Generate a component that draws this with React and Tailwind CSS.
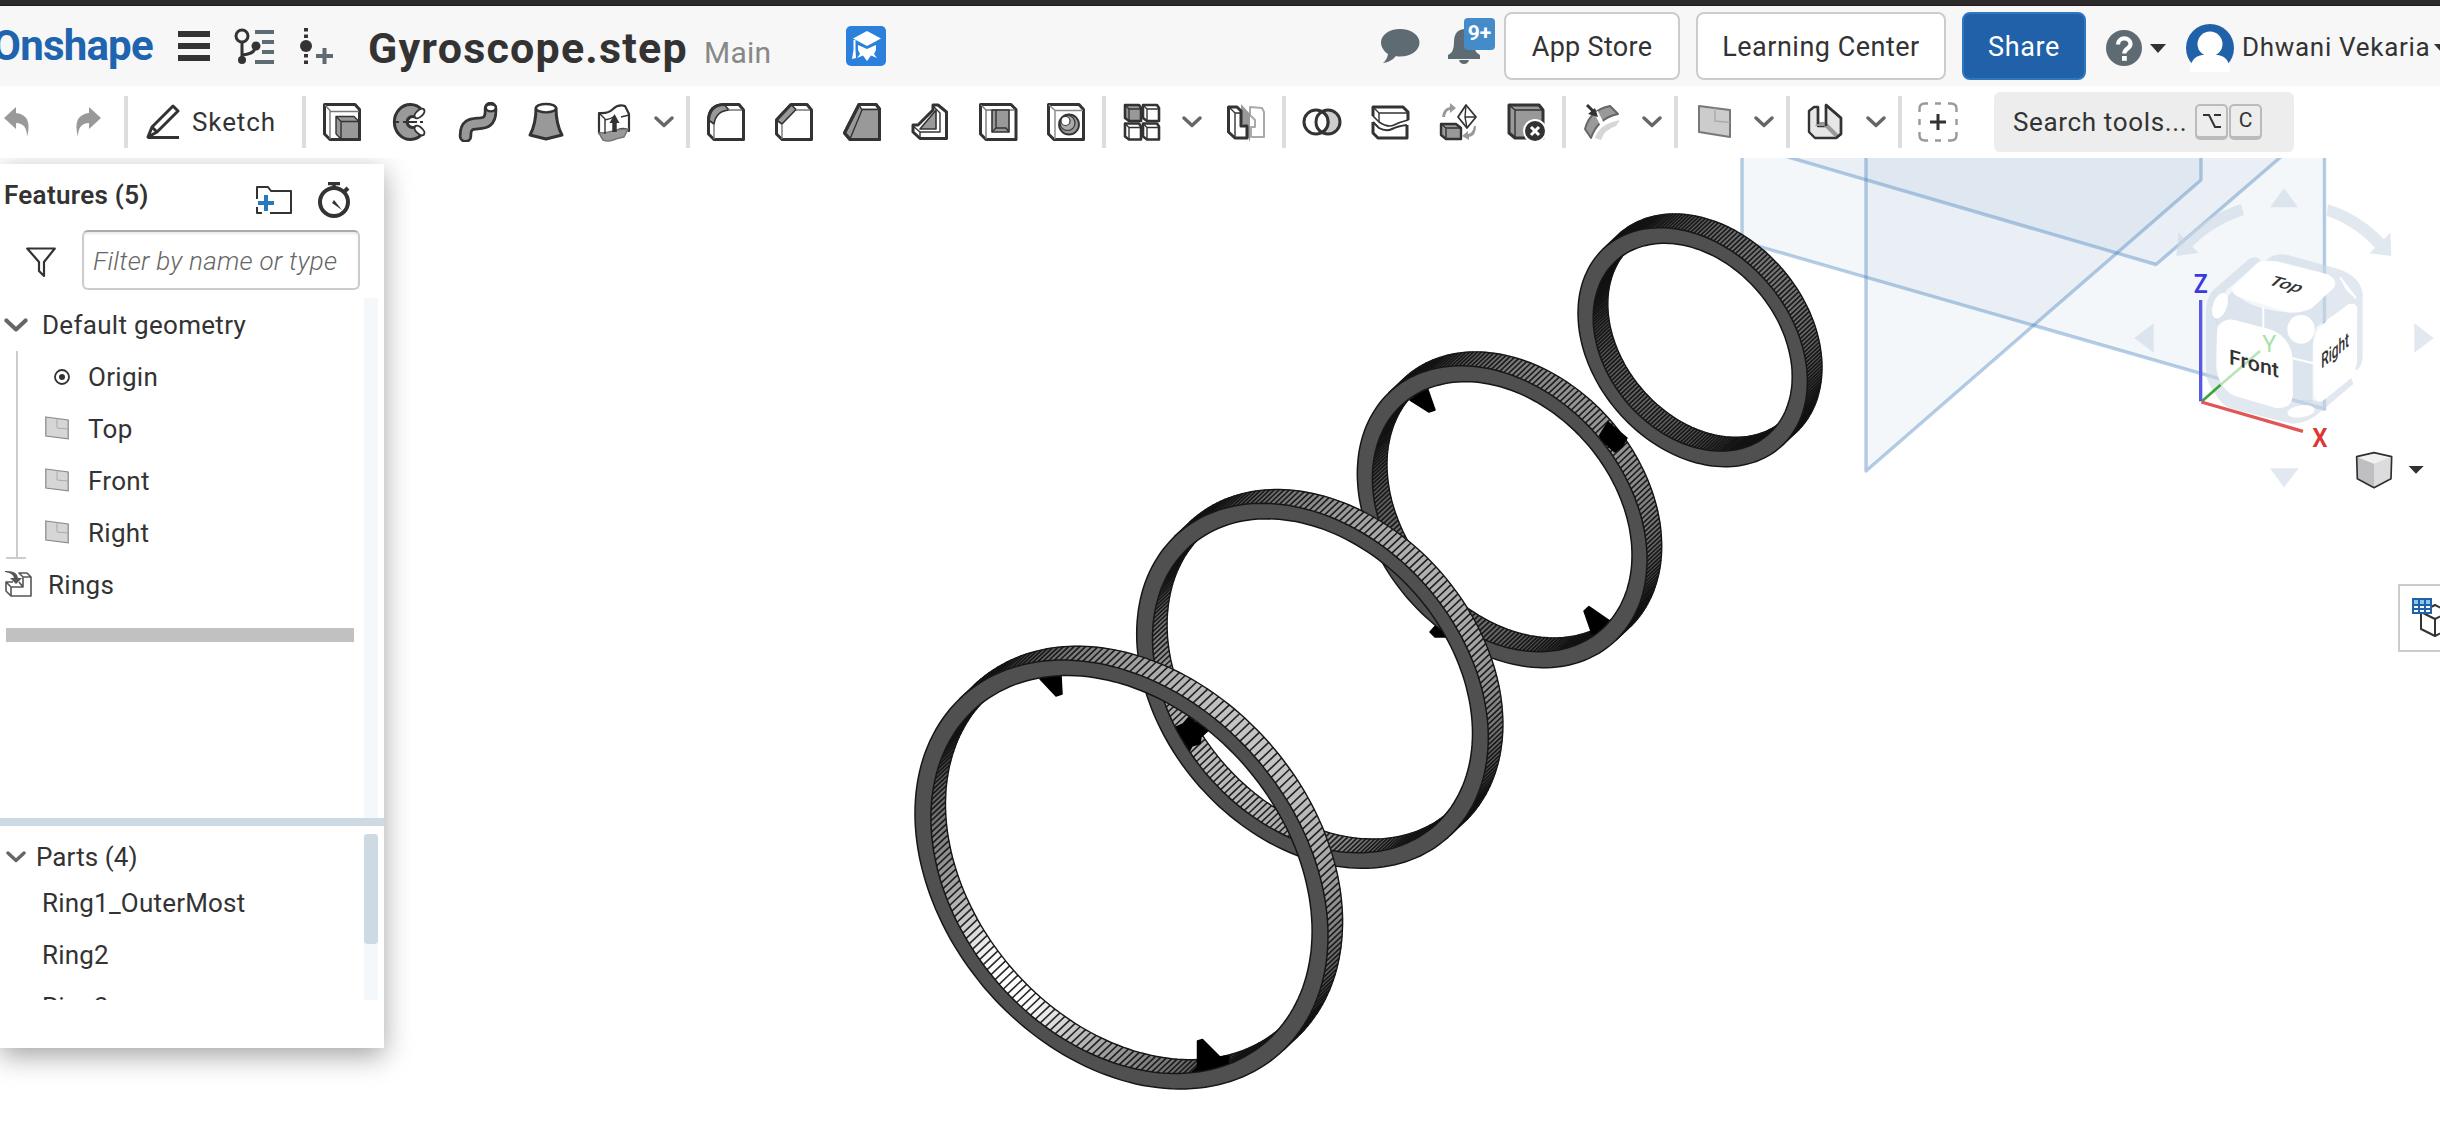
import React from "react";

const FONT = "font-['Roboto','Noto_Sans',sans-serif]";

/* ---------- 3D ring geometry ---------- */
const RHO = 0.285;
const SIN = Math.sqrt(1 - RHO * RHO);
const DX = 14.6;
const DY = -13.8;
const FACETS = 220;

const RINGS = [
  { cx: 1692.7, cy: 347.2, w: 114.7, h: 119.5, iw: 99.5, ih: 103.9, outer: 118, inner: 98, shine: 0 },
  {
    cx: 1502.2, cy: 516.7, w: 144.9, h: 151, iw: 129.8, ih: 135, outer: 150, inner: 116, shine: 0,
    wallPins: ["1600,435 1608,422 1627,438 1622,447 1615,452 1601,440"],
    pins: ["1410,400 1427,387 1435,410 1429,412", "1584,611 1589,606.5 1610,621 1607,632 1592,634", "1430,632 1438,623 1450,618 1455,637 1435,637"],
  },
  {
    cx: 1312.5, cy: 685.8, w: 175.8, h: 182.5, iw: 160, ih: 167, outer: 176, inner: 186, shine: 0,
    pins: ["1174,728 1183,724 1189,717 1195,723 1205,720.5 1210,729 1201,737 1200,743.5 1192,746 1189,752 1180,742"],
  },
  {
    cx: 1121.5, cy: 874.5, w: 206.5, h: 214.5, iw: 190.6, ih: 199, outer: 196, inner: 172, shine: 90,
    pins: ["1040,679 1061,675 1062,694 1056,696", "1197.5,1041 1202.5,1039.5 1220,1057 1229,1056 1228,1064 1200,1073 1192,1072 1197.5,1067"],
  },
];

const f = (n) => n.toFixed(1);

function point(r, w, h, t) {
  return [r.cx + w * Math.cos(t), r.cy + h * (RHO * Math.cos(t) + SIN * Math.sin(t))];
}

function ellipse(r, w, h) {
  let d = "";
  for (let i = 0; i < 180; i++) {
    const [x, y] = point(r, w, h, (i / 180) * Math.PI * 2);
    d += (i ? "L" : "M") + f(x) + " " + f(y);
  }
  return d + "Z";
}

function wall(r, w, h, center, peak, shine) {
  const quads = [];
  let lines = "";
  let edge = "";
  for (let i = 0; i < FACETS; i++) {
    const a = ((i - FACETS / 2) / FACETS) * Math.PI * 2;
    if (Math.abs(a) > Math.PI / 2) continue;
    const t = center + a;
    const step = (Math.PI * 2) / FACETS;
    const [x0, y0] = point(r, w, h, t);
    const [x1, y1] = point(r, w, h, t + step);
    const c = Math.max(0, Math.cos(a + step / 2));
    const v = Math.min(255, Math.round(peak * Math.pow(c, 0.9) + shine * Math.pow(c, 14)));
    quads.push({
      d: `M${f(x0)} ${f(y0)}L${f(x1)} ${f(y1)}L${f(x1 + DX)} ${f(y1 + DY)}L${f(x0 + DX)} ${f(y0 + DY)}Z`,
      fill: `rgb(${v},${v},${v})`,
    });
    lines += `M${f(x0)} ${f(y0)}l${DX} ${DY}`;
    edge += (edge ? "L" : "M") + f(x0 + DX) + " " + f(y0 + DY);
  }
  return { quads, lines, edge };
}

function Wall({ data }) {
  return (
    <g>
      {data.quads.map((q, i) => (
        <path key={i} d={q.d} fill={q.fill} stroke={q.fill} strokeWidth="0.4" />
      ))}
      <path d={data.lines} stroke="#0c0c0c" strokeOpacity="0.88" strokeWidth="1.6" fill="none" />
      <path d={data.edge} stroke="#161616" strokeWidth="1.4" fill="none" />
    </g>
  );
}

function Ring({ r }) {
  const peakAngle = (-51.7 * Math.PI) / 180;
  const outer = wall(r, r.w, r.h, peakAngle, r.outer, 0);
  const inner = wall(r, r.iw, r.ih, peakAngle + Math.PI, r.inner, r.shine);
  return (
    <g>
      <Wall data={inner} />
      <Wall data={outer} />
      {(r.wallPins || []).concat(r.pins || []).map((p, i) => (
        <polygon key={i} points={p} fill="#000" stroke="#000" strokeWidth="1.5" strokeLinejoin="round" />
      ))}
      <path d={ellipse(r, r.w, r.h) + ellipse(r, r.iw, r.ih)} fillRule="evenodd" fill="#505050" stroke="#161616" strokeWidth="1.5" />
    </g>
  );
}

function Planes() {
  const s = { fill: "#3c78aa", fillOpacity: 0.06, stroke: "#4682be", strokeOpacity: 0.4, strokeWidth: 3.4, strokeLinejoin: "round" };
  return (
    <g>
      <path d="M1742 150V241.5L2324.5 409V150" {...s} />
      <path d="M1866 150V471L2201 180V150" {...s} />
      <path d="M1764 150L2156 264.5L2290 149" {...s} />
    </g>
  );
}

function ViewCube() {
  return (
    <g transform="translate(2130 180) scale(0.33333)">
      <g fill="#cbd8e3" fillOpacity="0.58">
        <path d="M462 25L504 82H420Z" />
        <path d="M420 865H506L462 922Z" />
        <path d="M13 474L71 430V518Z" />
        <path d="M911 474L853 430V518Z" />
        <path d="M332 72L343 105Q250 135 187 200L206 218L139 228L146 157L163 177Q228 108 332 72Z" />
        <path d="M594 73L590 107Q680 140 735 204L718 220L784 228L781 157L762 178Q690 103 594 73Z" />
        <path d="M358 236Q375 226 391 238L388 247L290 330L250 400L262 420L258 540Q258 600 300 640L440 684L488 660L548 660L570 667L664 594L670 612L560 705Q520 735 480 730L310 688Q275 680 255 640Q225 600 228 570L228 400Q228 350 250 330Z" />
        <path fillRule="evenodd" d="M408 242Q430 218 470 224L628 268Q690 290 698 340V530Q694 570 672 570L680 552L682 385Q678 368 660 372L560 440Q548 470 548 500V665L488 660V540Q480 480 440 458L320 422Q280 414 262 440L250 400L310 330Q340 385 480 398Q530 398 560 370L610 325Q625 300 590 282L440 243ZM630 292L678 355Q660 345 645 325Z" />
      </g>
      <path d="M384 247Q410 240 440 245L590 282Q628 300 610 325L545 385Q510 403 470 395L330 352Q300 340 308 322Z" fill="#fff" />
      <path d="M262 470Q262 415 310 419L420 448Q480 470 488 535V650Q482 690 435 683L315 648Q268 625 260 570Z" fill="#fff" />
      <path d="M550 500Q553 455 580 432L655 373Q676 366 681 390V545Q675 585 650 605L585 658Q562 675 552 645Z" fill="#fff" />
      <ellipse cx="270" cy="377" rx="21" ry="40" fill="#fff" transform="rotate(20 270 377)" />
      <ellipse cx="513" cy="448" rx="41" ry="43" fill="#fff" />
      <ellipse cx="513" cy="694" rx="41" ry="18" fill="#fff" transform="rotate(-8 513 694)" />
      <path d="M400 380V446M488 535L550 550M630 292L678 355" stroke="#fff" strokeWidth="6" />
      <path d="M216 664L272 614" stroke="#3aa63a" strokeWidth="8" />
      <path d="M272 614L390 513" stroke="#b9e3b9" strokeWidth="8" />
      <path d="M212 360V664" stroke="#5a5ae0" strokeWidth="10" />
      <path d="M214 666L519 754" stroke="#e25555" strokeWidth="10" />
      <g className="font-['Roboto',sans-serif]">
        <text x="191" y="338" fontSize="76" fontWeight="600" fill="#3a3ae0" textLength="42" lengthAdjust="spacingAndGlyphs">Z</text>
        <text x="547" y="800" fontSize="76" fontWeight="600" fill="#dc3535" textLength="46" lengthAdjust="spacingAndGlyphs">X</text>
        <text x="397" y="515" fontSize="74" fill="#aadfaa" textLength="42" lengthAdjust="spacingAndGlyphs">Y</text>
        <text transform="matrix(1 0.28 0 1 297 551)" fontSize="62" fontWeight="500" fill="#333" textLength="150" lengthAdjust="spacingAndGlyphs">Front</text>
        <text transform="matrix(0.96 0.27 -0.62 0.58 410 312)" fontSize="60" fontWeight="500" fill="#333" textLength="98" lengthAdjust="spacingAndGlyphs">Top</text>
        <text transform="matrix(0.78 -0.66 0 1 574 567)" fontSize="62" fontWeight="500" fill="#333" textLength="106" lengthAdjust="spacingAndGlyphs">Right</text>
      </g>
      <g strokeLinejoin="round">
        <path d="M680 830L732 818L785 830L783 896L732 923L682 896Z" fill="#dcdcde" />
        <path d="M680 830L732 851V923L682 896Z" fill="#bfbfc1" />
        <path d="M680 830L732 818L785 830L732 851Z" fill="#f1f1f1" />
        <path d="M680 830L732 818L785 830L783 896L732 923L682 896Z" fill="none" stroke="#303030" strokeWidth="5" />
      </g>
      <path d="M836 858H881L858 881Z" fill="#303030" />
    </g>
  );
}

/* ---------- icons (40 x 40 artboards) ---------- */
const DARK = "#333";
const MID = "#999";

function Ico({ children }) {
  return (
    <svg viewBox="0 0 40 40" className="size-10 shrink-0" fill="none" stroke={DARK} strokeWidth="3" strokeLinejoin="round">
      {children}
    </svg>
  );
}
const Thin = (p) => <path strokeWidth="1.4" {...p} />;

const Extrude = () => (
  <Ico>
    <path d="M2.500 2.500H33L37.500 7.500V37.500H8L2.500 32Z" fill="#fff" />
    <Thin d="M3 3L8 8.500V37M8 9.500H37" stroke="#777" />
    <path d="M14 14.500H32L37 20V37H19L14 32Z" fill={MID} stroke="none" />
    <Thin d="M14 32V14.500H32L37 19.500H19V37M14 14.500L19 19.500M19 37L14 32" />
    <path d="M37.500 20V37.500H18" />
  </Ico>
);
const Revolve = () => (
  <Ico>
    <path d="M32 8A16 17.500 0 1 0 32 32L25 25A5.500 5.500 0 1 1 25 15Z" fill={MID} />
    <ellipse cx="29.500" cy="11.500" rx="3.200" ry="6" transform="rotate(48 29.500 11.500)" fill="#fff" strokeWidth="2" />
    <ellipse cx="29.500" cy="28.500" rx="3.200" ry="6" transform="rotate(-48 29.500 28.500)" fill="#fff" strokeWidth="2" />
    <path d="M5 20H9M13 20H27M30 20H33" strokeWidth="2" />
  </Ico>
);
const Sweep = () => (
  <Ico>
    <path d="M32.500 6.500C34 34 7 10 7.500 34" strokeWidth="13.500" strokeLinecap="round" />
    <path d="M32.500 6.500C34 34 7 10 7.500 34" stroke={MID} strokeWidth="8" strokeLinecap="round" />
    <ellipse cx="32.800" cy="5.800" rx="5" ry="3.600" fill="#fff" strokeWidth="2.400" />
  </Ico>
);
const Loft = () => (
  <Ico>
    <path d="M10 6Q10 22 4 33L20 37L36 33Q30 22 30 6Z" fill={MID} />
    <ellipse cx="20" cy="6.200" rx="10" ry="4.200" fill="#fff" strokeWidth="2.400" />
  </Ico>
);
const Thicken = () => (
  <Ico>
    <path d="M5 11Q14 12 19 7T31 4L35 12V29L31 27Q26 26 19 31T5 31Z" fill="#fff" strokeWidth="2.200" />
    <path d="M5 31Q13 31 19 29T34 27L30 35Q24 36 19 38T9 38Z" fill={MID} stroke="#777" strokeWidth="1.600" />
    <Thin d="M5 11L11 17V32M11 18Q17 17 21 14M27 15L35 13" />
    <path d="M20.500 30V19" strokeWidth="4.500" />
    <path d="M15.500 21L20.500 12L25.500 21Z" fill={DARK} stroke="none" />
  </Ico>
);
const Fillet = () => (
  <Ico>
    <path d="M2.500 18Q3 3 18 2.500H33L37.500 8V37.500H8L2.500 32Z" fill="#fff" />
    <path d="M2.500 18Q3 3 18 2.500L23 8Q10 9 8 22Z" fill={MID} strokeWidth="1.600" />
    <Thin d="M8 22V37M22 8H36" stroke="#777" />
    <path d="M2.500 19Q3 3 18 2.500" />
  </Ico>
);
const Chamfer = () => (
  <Ico>
    <path d="M2.500 18L17 2.500H33L37.500 8V37.500H8L2.500 32Z" fill="#fff" />
    <path d="M2.500 18L17 2.500L22 7.500L8 22Z" fill={MID} strokeWidth="1.600" />
    <Thin d="M8 22V37M22 8H36" stroke="#777" />
    <path d="M2.500 18L17 2.500" />
  </Ico>
);
const Draft = () => (
  <Ico>
    <path d="M17 2.500H34L37.500 7V37.500H8L2.500 31Z" fill={MID} />
    <path d="M17 2.500H34L37 6.500H20Z" fill="#fff" stroke="none" />
    <Thin d="M17 3L20 8L8 37M20 7.500H37" />
    <path d="M17 2.500H34L37.500 7V37.500H8L2.500 31Z" />
  </Ico>
);
const Rib = () => (
  <Ico>
    <path d="M3 23H8L23 8V3H28L36.500 10V36.500H10L3 30Z" fill="#fff" />
    <path d="M10 27L26 8V27Z" fill={MID} strokeWidth="1.600" />
    <Thin d="M3 24L10 30H30V11L23 4M10 30V36" />
  </Ico>
);
const Shell = () => (
  <Ico>
    <path d="M2.500 2.500H33L38 7.500V37.500H8L2.500 32Z" fill="#fff" />
    <Thin d="M3 3L8 8V37M8 8H37" stroke="#777" />
    <path d="M14 8H31V30H14Z" fill={MID} strokeWidth="1.600" />
    <Thin d="M14 30L18 26H28L31 30M18 26V8" />
  </Ico>
);
const Hole = () => (
  <Ico>
    <path d="M2.500 2.500H33L37.500 7.500V37.500H8L2.500 32Z" fill="#fff" />
    <Thin d="M3 3L9 8.500V37M9 8.500H37" stroke="#888" />
    <circle cx="23" cy="22.500" r="10" fill={MID} strokeWidth="1.800" />
    <circle cx="21.500" cy="21" r="7.500" fill="#aaa" strokeWidth="1.200" />
    <circle cx="19.500" cy="19" r="4.500" fill="#fff" strokeWidth="1.200" />
  </Ico>
);
const Pattern = () => (
  <Ico>
    {[[3, 3, MID], [21, 3, "#fff"], [3, 21.5, "#fff"], [21, 21.5, "#fff"]].map(([x, y, c]) => (
      <g key={x + "-" + y} transform={`translate(${x} ${y})`}>
        <path d="M0 0H14L16 3V16H4L0 13Z" fill={c} strokeWidth="2.600" />
        <Thin d="M0 0L4 4V16M4 4H16" />
      </g>
    ))}
  </Ico>
);
const Mirror = () => (
  <Ico>
    <path d="M24 13V5L36 6L38 10V35H25V25H29V18Z" stroke="#aaa" strokeWidth="2" fill="#fff" />
    <path d="M15 2L24 12V40L21 32V26L15 20Z" fill={MID} stroke="none" />
    <path d="M2.500 5H11L15 9V24H21V36H9L2.500 30Z" fill="#fff" />
    <Thin d="M3 5L9 11V36M9 11H14" />
  </Ico>
);
const Boolean3D = () => (
  <Ico>
    <ellipse cx="26" cy="20" rx="12" ry="12" fill="#ccc" />
    <ellipse cx="14" cy="20" rx="12" ry="12" fill="#fff" />
    <path d="M20 9.600A12 12 0 0 1 20 30.400A12 12 0 0 1 20 9.600Z" fill="#fff" />
  </Ico>
);
const Split = () => (
  <Ico>
    <path d="M3 14V5H33L38 10V18Q30 20 24 23T9 20L3 14Z" fill="#fff" strokeWidth="1.600" />
    <path d="M3 14V5H33L38 10V18" />
    <Thin d="M3 5L9 11V20M9 11H37" />
    <path d="M3 20V31L8 36H37V23" />
    <Thin d="M3 20L9 26Q16 30 22 27T37 23" strokeWidth="2" />
  </Ico>
);
const Transform = () => (
  <Ico>
    <path d="M3 22H18L23 26V37H8L3 33Z" fill={MID} strokeWidth="2.400" />
    <Thin d="M3 22L8 26V37M8 26H23" />
    <path d="M28 3L38 15L29 26L20 15Z" fill="#fff" strokeWidth="1.800" />
    <Thin d="M28 3L27 15L29 26M27 15L38 15" />
    <path d="M4 15Q5 6 12 5V1L18 6L12 11V8Q8 8 7 15Z" fill={MID} stroke="none" />
    <path d="M38 24Q38 34 31 35V38L24 34L30 29V32Q35 31 36 24Z" fill={MID} stroke="none" />
  </Ico>
);
const DeletePart = () => (
  <Ico>
    <path d="M3 3H33L37 8V36H9L3 31Z" fill={MID} />
    <Thin d="M3 3L9 8V36M9 8H37" />
    <circle cx="29" cy="29" r="11" fill={DARK} stroke="#fff" strokeWidth="2" />
    <path d="M25 25L33 33M33 25L25 33" stroke="#fff" />
  </Ico>
);
const Curve = () => (
  <Ico>
    <path d="M13 36Q17 22 38 18L34 24Q22 28 19 38Z" fill="#d6d6d6" stroke="none" />
    <path d="M3 27Q8 8 28 4L36 12Q16 16 9 36Z" fill={MID} stroke="#666" strokeWidth="2" />
    <path d="M14 10L21 24" stroke="#fff" strokeWidth="4" />
    <path d="M5 3L13 11" />
    <path d="M16 15L6 12L13 6Z" fill={DARK} stroke="none" />
  </Ico>
);
const Plane = () => (
  <Ico>
    <path d="M5 4L36 8V35L5 30Z" fill="#ccc" stroke="#777" strokeWidth="2" />
    <Thin d="M21 6V19L36 20.500" stroke="#aaa" />
  </Ico>
);
const Sheet = () => (
  <Ico>
    <path d="M3 9L8 5H12V24L20 24V3L35 16V32L30 36H9L3 30Z" fill="#e6e6e6" strokeWidth="2.400" />
    <path d="M12 20H20L34 34L30 36L18 24H9Z" fill={MID} stroke="none" />
    <path d="M20 24V3L35 16V32L30 36M12 5V22" strokeWidth="2.400" />
  </Ico>
);
const AddTool = () => (
  <Ico>
    <path d="M1.500 10V7Q1.500 1.500 7 1.500H10M17 1.500H23M30 1.500H33Q38.500 1.500 38.500 7V10M38.500 17V23M38.500 30V33Q38.500 38.500 33 38.500H30M23 38.500H17M10 38.500H7Q1.500 38.500 1.500 33V30M1.500 23V17" stroke={MID} strokeWidth="2.400" />
    <path d="M20 12V28M12 20H28" />
  </Ico>
);

function Chevron({ className = "w-5" }) {
  return (
    <svg viewBox="0 0 20 12" className={className + " shrink-0"} fill="none" stroke="#666" strokeWidth="3.4" strokeLinecap="round" strokeLinejoin="round">
      <path d="M2 2L10 9.500L18 2" />
    </svg>
  );
}
const Sep = () => <div className="h-[52px] w-1 shrink-0 bg-[#ddd]" />;

function Group({ icons, menu }) {
  return (
    <>
      <Sep />
      <div className={"ml-4 flex items-center gap-7 " + (menu ? "mr-5" : "mr-4")}>
        {icons.map((I, i) => (
          <I key={i} />
        ))}
      </div>
      {menu && <Chevron className="mr-3 w-5" />}
    </>
  );
}

function Toolbar() {
  return (
    <div className="flex h-[72px] items-center bg-white">
      <svg viewBox="0 0 28 30" className="ml-1 h-[30px] w-7 shrink-0" fill="#999">
        <path d="M12 0V6Q29 8 23 30Q23 16 12 16V22L0 11Z" />
      </svg>
      <svg viewBox="0 0 28 30" className="mr-[23px] ml-[41px] h-[30px] w-7 shrink-0" fill="#999">
        <path d="M16 0V6Q-1 8 5 30Q5 16 16 16V22L28 11Z" />
      </svg>
      <Sep />
      <svg viewBox="0 0 34 36" className="ml-[18px] h-9 w-[34px] shrink-0" fill="none" stroke="#333" strokeWidth="3" strokeLinejoin="round">
        <path d="M2 33L6 23L27 2L32 7L11 28ZM6 23L11 28" />
        <path d="M2 33.500H33" />
      </svg>
      <span className="ml-3 w-[110px] shrink-0 text-[26px] tracking-[0.9px] text-[#333]">Sketch</span>
      <Group icons={[Extrude, Revolve, Sweep, Loft, Thicken]} menu />
      <Group icons={[Fillet, Chamfer, Draft, Rib, Shell, Hole]} />
      <Sep />
      <div className="mr-5 ml-4 flex"><Pattern /></div>
      <Chevron className="mr-6 w-5" />
      <div className="mr-4 flex"><Mirror /></div>
      <Group icons={[Boolean3D, Split, Transform, DeletePart]} />
      <Group icons={[Curve]} menu />
      <Group icons={[Plane]} menu />
      <Group icons={[Sheet]} menu />
      <Group icons={[AddTool]} />
      <div className="ml-5 flex h-[60px] w-[300px] items-center rounded-md bg-[#ededed] pl-[19px] text-[26px] tracking-[0.65px] text-[#333]">
        <span className="w-[182px]">Search tools...</span>
        <span className="flex h-9 w-[33px] items-center justify-center rounded-[5px] border-2 border-b-4 border-[#bbb] pl-px">
          <svg viewBox="0 0 18 16" className="w-[18px]" fill="none" stroke="#333" strokeWidth="2">
            <path d="M0 2H6L12 14H18M11 2H18" />
          </svg>
        </span>
        <span className="ml-px flex h-9 w-[33px] items-center justify-center rounded-[5px] border-2 border-b-4 border-[#bbb] text-[21px] tracking-normal">C</span>
      </div>
    </div>
  );
}

function Header() {
  const btn = "flex h-[68px] shrink-0 items-center justify-center rounded-lg border-2 pt-0.5 text-[27px]";
  return (
    <div className="flex h-20 shrink-0 items-center bg-[#f7f7f7] text-[#333]">
      <div className="-ml-2 w-[186px] shrink-0 text-[42px] leading-none font-bold tracking-[-0.8px] text-[#2063ae]">Onshape</div>
      <svg viewBox="0 0 32 30" className="w-8 shrink-0" fill="#333">
        <path d="M0 0H32V6H0ZM0 12H32V18H0ZM0 24H32V30H0Z" />
      </svg>
      <svg viewBox="0 0 40 36" className="ml-6 w-10 shrink-0" fill="none" stroke="#333" strokeWidth="3">
        <circle cx="8" cy="8" r="6" />
        <path d="M8 14V31M8 27Q20 26 21 20" />
        <circle cx="8" cy="32" r="4" fill="#333" stroke="none" />
        <circle cx="22" cy="18" r="4.500" fill="#333" stroke="none" />
        <path d="M21 4H40M28 14H40M28 24H40M21 34H40" stroke="#5f6b73" strokeWidth="4" />
      </svg>
      <svg viewBox="0 0 34 36" className="ml-[25px] w-[34px] shrink-0" fill="#333">
        <path d="M5 0H9V3.500H5ZM5 6.500H9V10H5ZM5 26H9V29.500H5ZM5 32.500H9V36H5Z" />
        <circle cx="7" cy="18" r="6" />
        <path d="M23.500 20H27.500V26H34V30H27.500V36H23.500V30H17V26H23.500Z" fill="#5f6b73" />
      </svg>
      <div className="mt-1 ml-[35px] flex w-[478px] shrink-0 items-baseline leading-none">
        <span className="w-[336px] text-[43px] font-bold tracking-[1.2px]">Gyroscope.step</span>
        <span className="text-[30px] tracking-[0.2px] text-[#888]">Main</span>
      </div>
      <svg viewBox="0 0 40 40" className="w-10 shrink-0">
        <rect width="40" height="40" rx="5" fill="#2b80dc" />
        <path d="M21 5L35 12.500L21 20L7 12.500Z" fill="#fff" />
        <path d="M12 19L21 23L30 19V24L28 28L31 32L25 29.500L21 35L17 29.500L11 32L14 28L12 24Z" fill="#fff" />
        <path d="M7.500 14V24L6 33L10 32L9.500 24V14Z" fill="#fff" />
      </svg>
      <svg viewBox="0 0 40 34" className="ml-[494px] w-10 shrink-0" fill="#5f6b73">
        <path d="M20 0C9 0 1 6 1 13.500C1 19 5 23 8 25Q7 31 3 34Q11 33 16 27Q18 27.500 20 27.500C31 27.500 39.500 21.500 39.500 13.500C39.500 6 31 0 20 0Z" />
      </svg>
      <div className="relative mr-[23px] ml-[27px] h-9 w-[34px] shrink-0">
        <svg viewBox="0 0 34 36" className="w-[34px]" fill="#5f6b73">
          <path d="M17 1Q27 2 27 14Q27 25 33 27V31H1V27Q7 25 7 14Q7 2 17 1ZM12 32H22Q21 36 17 36Q13 36 12 32Z" />
        </svg>
        <div className="absolute -top-2.5 left-[17px] flex h-8 w-[31px] items-center justify-center rounded-[4px] bg-[#448bc9] text-[21px] font-bold text-white">9+</div>
      </div>
      <div className={btn + " w-44 border-[#ccc] bg-white tracking-[0.3px]"}>App Store</div>
      <div className={btn + " ml-4 w-[250px] border-[#ccc] bg-white tracking-[0.5px]"}>Learning Center</div>
      <div className={btn + " ml-4 w-[124px] border-[#2f78c0] bg-[#2061a9] tracking-[0.6px] text-white"}>Share</div>
      <svg viewBox="0 0 36 36" className="mt-1 ml-5 w-9 shrink-0">
        <circle cx="18" cy="18" r="18" fill="#5f6b73" />
        <path d="M12 14.500C12 6.500 24.500 6.500 24.500 14C24.500 18.500 18.300 18.500 18.300 23.500" fill="none" stroke="#fff" strokeWidth="4.200" />
        <rect x="16" y="26" width="4.800" height="4.800" fill="#fff" />
      </svg>
      <svg viewBox="0 0 16 9" className="mt-1 ml-2 w-4 shrink-0" fill="#333"><path d="M0 0H16L8 9Z" /></svg>
      <svg viewBox="0 0 48 48" className="mt-1 ml-5 w-12 shrink-0">
        <circle cx="24" cy="24" r="24" fill="#2061a9" />
        <ellipse cx="24" cy="20" rx="12.500" ry="12.500" fill="#fff" />
        <path d="M4 48Q4 33 16 31H32Q44 33 44 48Z" fill="#fff" />
      </svg>
      <span className="mt-0.5 ml-2 shrink-0 text-[26px] tracking-[0.7px]">Dhwani Vekaria</span>
      <svg viewBox="0 0 16 9" className="mt-1 ml-1 w-4 shrink-0" fill="#333"><path d="M0 0H16L8 9Z" /></svg>
    </div>
  );
}

function MiniPlane() {
  return (
    <svg viewBox="0 0 24 24" className="-mt-0.5 w-6 shrink-0">
      <path d="M0.800 1L23.200 4V22.800L0.800 20Z" fill="#d6d6d6" stroke="#888" strokeWidth="1.200" />
      <path d="M12 2.500V12L23 13" fill="none" stroke="#aaa" />
    </svg>
  );
}

function FeaturePanel() {
  return (
    <div className="relative mt-1.5 flex h-[884px] w-96 flex-col bg-white text-[26px] leading-none tracking-[0.3px] text-[#333] shadow-[0_8px_26px_rgba(0,0,0,0.36)]">
      <div className="flex h-[66px] items-center">
        <span className="-mt-1 ml-1 w-[252px] text-[26px] font-semibold tracking-[0.3px]">Features (5)</span>
        <svg viewBox="0 0 36 30" className="mt-1.5 w-9" fill="none" stroke="#333" strokeWidth="2" strokeLinejoin="round">
          <path d="M1 14V2H12L15 6H35V28H14M1 22V28H6" />
          <path d="M2 18H18M10 10V26" stroke="#2878be" strokeWidth="4" />
        </svg>
        <svg viewBox="0 0 32 36" className="mt-1.5 ml-[26px] w-8" fill="none" stroke="#333">
          <circle cx="16" cy="20" r="14" strokeWidth="4" />
          <path d="M10 1.500H22M16 2V6" strokeWidth="3.500" />
          <path d="M26 10L30 6" strokeWidth="4" />
          <path d="M16 18L24 28L14 21Z" fill="#333" stroke="none" />
        </svg>
      </div>
      <div className="flex h-[60px] items-center">
        <svg viewBox="0 0 30 31" className="mt-1 ml-[26px] w-[30px]" fill="none" stroke="#333" strokeWidth="2.200" strokeLinejoin="round">
          <path d="M1.200 1.500H28.800L18 15V29L13 24V15Z" />
        </svg>
        <div className="ml-[26px] flex h-[60px] w-[278px] items-center rounded-md border-2 border-[#ccc] border-t-[#aaa] pt-0.5 pl-[9px] text-[26px] font-light tracking-[0.25px] text-[#666] italic shadow-[inset_0_2px_2px_rgba(0,0,0,0.08)]">
          Filter by name or type
        </div>
      </div>
      <div className="mt-2 flex h-[520px]">
        <div className="w-[364px] pt-px">
          <div className="flex h-[52px] items-center pl-1">
            <Chevron className="w-6" />
            <span className="ml-[14px]">Default geometry</span>
          </div>
          <div className="flex h-52">
            <div className="flex w-8 flex-col items-center">
              <div className="w-0.5 flex-1 translate-x-px bg-[#ccc]" />
              <div className="h-0.5 w-5 bg-[#ccc]" />
            </div>
            <div className="flex-1">
              <div className="flex h-[52px] items-center">
                <svg viewBox="0 0 16 16" className="ml-[22px] w-4" fill="none" stroke="#333" strokeWidth="1.800">
                  <circle cx="8" cy="8" r="7" />
                  <circle cx="8" cy="8" r="3" fill="#333" stroke="none" />
                </svg>
                <span className="ml-[18px]">Origin</span>
              </div>
              {["Top", "Front", "Right"].map((n) => (
                <div key={n} className="flex h-[52px] items-center pl-[13px]">
                  <MiniPlane />
                  <span className="ml-[19px]">{n}</span>
                </div>
              ))}
            </div>
          </div>
          <div className="flex h-[52px] items-center pl-[5px]">
            <svg viewBox="0 0 27 27" className="-mt-1 w-[27px]" fill="none" stroke="#555" strokeWidth="1.600" strokeLinejoin="round">
              <path d="M1 12L6 17H18V7L14 3L22 3L26 7V26H6L1 21ZM6 17V26M18 7H26M1 12H8M18 17L14 12" />
              <path d="M0 1Q12 0 13 8H17L11 14L5 8H9Q8 3 0 2Z" fill="#555" stroke="none" />
            </svg>
            <span className="ml-4">Rings</span>
          </div>
          <div className="mt-[17px] ml-1.5 h-3.5 w-[348px] bg-[#c1c1c1]" />
        </div>
        <div className="w-3.5 bg-[#f4f8fb]" />
      </div>
      <div className="h-2 shrink-0 bg-[#cdd9e3]" />
      <div className="mt-2 flex h-[166px] overflow-hidden">
        <div className="w-[364px] pt-[3px]">
          <div className="flex h-10 items-center pl-1.5">
            <Chevron className="w-5" />
            <span className="ml-2.5 tracking-[0.1px]">Parts (4)</span>
          </div>
          {["Ring1_OuterMost", "Ring2", "Ring3"].map((n) => (
            <div key={n} className="flex h-[52px] items-center pl-[42px] tracking-[0.2px]">{n}</div>
          ))}
        </div>
        <div className="w-3.5 bg-[#f4f8fb]">
          <div className="h-[110px] rounded bg-[#cdd9e3]" />
        </div>
      </div>
    </div>
  );
}

export default function App() {
  return (
    <div className={"relative flex h-[1124px] w-[2440px] flex-col overflow-hidden bg-white " + FONT}>
      <div className="h-1.5 shrink-0 border-b border-[#2a1820] bg-[#2b2b2b]" />
      <Header />
      <Toolbar />
      <div className="relative flex-1 overflow-hidden">
        <svg viewBox="0 158 2440 966" className="absolute inset-0 h-[966px] w-[2440px]">
          <Planes />
          {RINGS.map((r) => (
            <Ring key={r.cx} r={r} />
          ))}
          <ViewCube />
        </svg>
        <FeaturePanel />
        <div className="absolute top-[426px] left-[2398px] flex h-[68px] w-[60px] items-start border-2 border-[#ccc] bg-white pt-3 pl-3">
          <svg viewBox="0 0 44 40" className="h-10 w-11 shrink-0" fill="none" stroke="#333" strokeWidth="2" strokeLinejoin="round">
            <path d="M9 14L23 7L37 14V31L23 38L9 31ZM9 14L23 21L37 14M23 21V38" fill="#fff" />
            <rect width="20" height="16" fill="#2061a9" stroke="none" />
            <path d="M2 2H6V6H2ZM8 2H12V6H8ZM14 2H18V6H14Z" fill="#8cc4ee" stroke="none" />
            <path d="M2 8H6V10H2ZM8 8H12V10H8ZM14 8H18V10H14ZM2 12H6V14H2ZM8 12H12V14H8ZM14 12H18V14H14Z" fill="#fff" stroke="none" />
          </svg>
        </div>
      </div>
    </div>
  );
}
